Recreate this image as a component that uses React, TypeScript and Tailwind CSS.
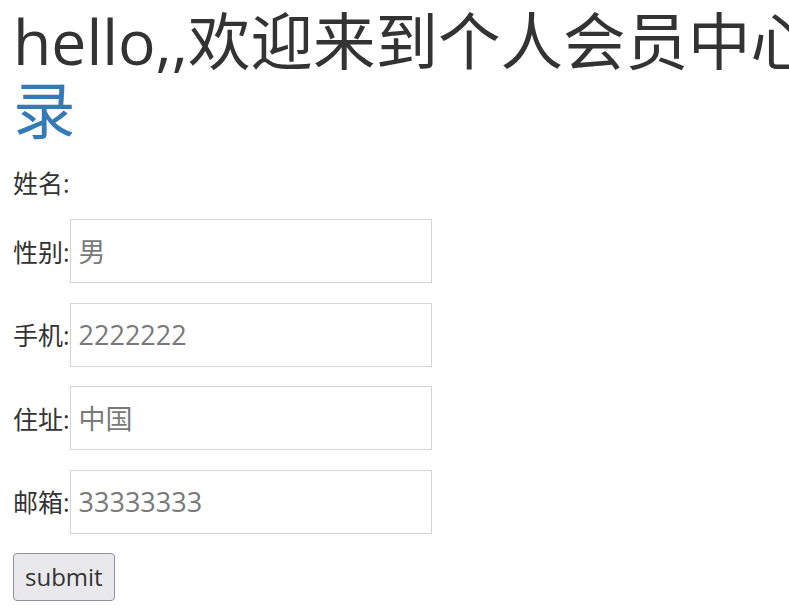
export default function App() {
  const fields = [
    { label: '性别', placeholder: '男' },
    { label: '手机', placeholder: '2222222' },
    { label: '住址', placeholder: '中国' },
    { label: '邮箱', placeholder: '33333333' },
  ]

  return (
    <div className="min-h-screen overflow-hidden bg-white px-[13px] text-[#333] font-['Open_Sans','Noto_Sans_CJK_SC',sans-serif]">
      {/* Header */}
      <h1 className="w-[880px] pt-[7px] text-[62.5px] leading-[1.1] font-normal">
        hello,,欢迎来到个人会员中心<a href="#" className="text-[#337ab7]">登录</a>
      </h1>

      {/* Form */}
      <form className="mt-[21px] flex flex-col gap-[19.6px] text-[25px]">
        <div className="leading-[34px]">姓名:</div>
        {fields.map((f) => (
          <div key={f.label} className="flex items-baseline">
            <span>{f.label}:</span>
            <input
              type="text"
              placeholder={f.placeholder}
              className="h-16 w-[362px] border border-[#d4d4d4] px-2 text-[27px] outline-none placeholder:text-[#7a7a7a]"
            />
          </div>
        ))}
        <div>
          <button
            type="submit"
            className="h-12 rounded border border-[#8f8f9d] bg-[#e9e9ed] px-[11px] text-[24px] text-[#333]"
          >
            submit
          </button>
        </div>
      </form>
    </div>
  )
}
